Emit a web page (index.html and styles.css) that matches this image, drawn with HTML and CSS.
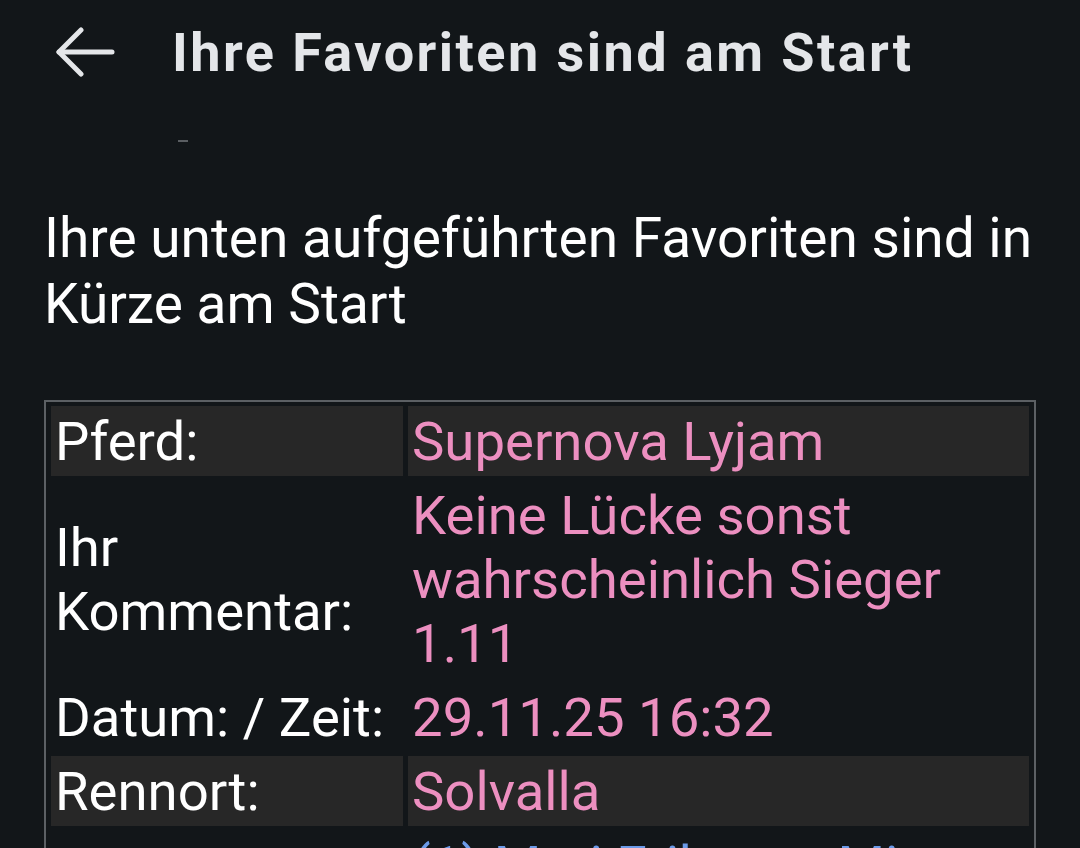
FILE: index.html
```html
<!DOCTYPE html>
<html lang="de">
<head>
<meta charset="utf-8">
<title>Ihre Favoriten sind am Start</title>
<link rel="stylesheet" href="styles.css">
</head>
<body>
<header class="appbar">
  <button class="back" aria-label="Zurück">
    <svg width="60" height="52" viewBox="0 0 60 52" fill="none" stroke="#e4e6e9" stroke-width="5" stroke-linecap="round" stroke-linejoin="round">
      <path d="M4 25 H57"/>
      <path d="M26 3 L4 25 L26 47"/>
    </svg>
  </button>
  <h1 class="title">Ihre Favoriten sind am Start</h1>
</header>
<div class="divider-row"><span class="dash"></span></div>
<p class="intro">Ihre unten aufgeführten Favoriten sind in Kürze am Start</p>
<table class="fav">
  <tr class="shaded">
    <td class="label">Pferd:</td>
    <td class="value">Supernova Lyjam</td>
  </tr>
  <tr>
    <td class="label">Ihr Kommentar:</td>
    <td class="value">Keine Lücke sonst wahrscheinlich Sieger 1.11</td>
  </tr>
  <tr>
    <td class="label">Datum: / Zeit:</td>
    <td class="value">29.11.25 16:32</td>
  </tr>
  <tr class="shaded">
    <td class="label">Rennort:</td>
    <td class="value">Solvalla</td>
  </tr>
  <tr>
    <td class="label">Rennen:</td>
    <td class="value link">(1) Mari Eriksson Minnes Lopp</td>
  </tr>
</table>
</body>
</html>
```
FILE: styles.css
```css
html, body {
  margin: 0;
  padding: 0;
  background: #121619;
  overflow: hidden;
}
body {
  width: 1080px;
  height: 848px;
  font-family: Roboto, "Noto Sans", sans-serif;
  color: #f7f7f7;
}
.appbar {
  display: flex;
  align-items: center;
  height: 106px;
  padding-left: 55px;
}
.back {
  background: none;
  border: 0;
  padding: 0;
  width: 60px;
  height: 52px;
  display: flex;
  margin-right: 57px;
}
.title {
  margin: 0;
  font-size: 54px;
  font-weight: 700;
  letter-spacing: 2.45px;
  color: #e4e6e9;
  line-height: 1;
}
.divider-row {
  height: 70px;
  padding-left: 178px;
  display: flex;
  align-items: flex-start;
}
.dash {
  display: block;
  width: 10px;
  height: 2px;
  margin-top: 34px;
  background: #5a5e62;
}
.intro {
  margin: 29px 0 0 0;
  padding: 0 20px 0 44px;
  font-size: 55px;
  line-height: 66px;
  color: #ffffff;
}
.fav {
  margin: 63px 0 0 44px;
  width: 992px;
  border: 2px solid #5c6064;
  border-spacing: 5px 4px;
  font-size: 54.5px;
  line-height: 64px;
}
.fav td {
  padding: 3px 4px;
  vertical-align: middle;
}
.fav .label {
  width: 344px;
  color: #ffffff;
}
.fav .value {
  color: #ec8fc0;
  padding-left: 4px;
}
.fav .shaded td {
  background: #272727;
}
.fav .link {
  color: #6b9ae8;
}
```
